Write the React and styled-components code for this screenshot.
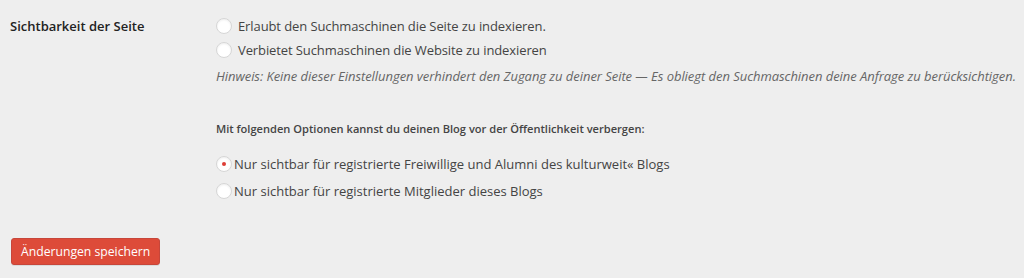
import React, { useState } from 'react';
import styled, { createGlobalStyle } from 'styled-components';

const GlobalStyle = createGlobalStyle`
  html, body {
    margin: 0;
    padding: 0;
    background: #eeeeee;
  }
  body {
    font-family: "Open Sans", "Liberation Sans", sans-serif;
    color: #444;
  }
`;

const Page = styled.div`
  width: 1024px;
  height: 278px;
  background: #eeeeee;
  overflow: hidden;
`;

const SettingRow = styled.div`
  display: flex;
  padding-top: 14px;
`;

const Label = styled.div`
  width: 206px;
  padding-left: 10px;
  padding-top: 2px;
  font-size: 13px;
  font-weight: 600;
  color: #222;
  line-height: 20px;
`;

const Field = styled.div`
  display: flex;
  flex-direction: column;
`;

const RadioList = styled.div`
  display: flex;
  flex-direction: column;
  gap: ${(p) => p.$gap}px;
`;

const Option = styled.label`
  display: flex;
  align-items: center;
  gap: ${(p) => p.$gap}px;
  height: 24px;
  font-size: 13px;
  letter-spacing: ${(p) => p.$tracking}px;
  color: #444;
  cursor: pointer;
`;

const Radio = styled.span`
  position: relative;
  width: 16px;
  height: 16px;
  flex: none;
  border-radius: 50%;
  background: #fff;
  border: 1px solid #d6d6d6;
  box-shadow: inset 0 1px 2px rgba(0, 0, 0, 0.07);
  box-sizing: border-box;

  &[aria-checked='true']::after {
    content: '';
    position: absolute;
    left: 5px;
    top: 5px;
    width: 4px;
    height: 4px;
    border-radius: 50%;
    background: #dd3d36;
  }
`;

const Hint = styled.p`
  margin: 4px 0 0;
  font-size: 13px;
  font-style: italic;
  letter-spacing: -0.05px;
  color: #666;
  line-height: 20px;
`;

const SubHeading = styled.p`
  margin: 33px 0 13px;
  font-size: 11.1px;
  font-weight: 600;
  color: #444;
  line-height: 20px;
`;

const Footer = styled.div`
  padding: 35px 0 0 11px;
`;

const SaveButton = styled.button`
  height: 27px;
  padding: 0 9px;
  border: 1px solid #c7463a;
  border-radius: 3px;
  background: #dd4b39;
  color: #fff;
  font-family: "Open Sans", "Liberation Sans", sans-serif;
  font-size: 12.2px;
  line-height: 25px;
  box-shadow: 0 1px 0 rgba(0, 0, 0, 0.08);
  cursor: pointer;
`;

const searchOptions = [
  'Erlaubt den Suchmaschinen die Seite zu indexieren.',
  'Verbietet Suchmaschinen die Website zu indexieren',
];

const privateOptions = [
  'Nur sichtbar für registrierte Freiwillige und Alumni des kulturweit« Blogs',
  'Nur sichtbar für registrierte Mitglieder dieses Blogs',
];

export default function App() {
  const [selected, setSelected] = useState('private-0');

  return (
    <Page>
      <GlobalStyle />
      <SettingRow>
        <Label>Sichtbarkeit der Seite</Label>
        <Field>
          <RadioList $gap={0}>
            {searchOptions.map((text, i) => (
              <Option key={text} $gap={6} $tracking={-0.1} onClick={() => setSelected('search-' + i)}>
                <Radio aria-checked={selected === 'search-' + i} />
                {text}
              </Option>
            ))}
          </RadioList>
          <Hint>
            Hinweis: Keine dieser Einstellungen verhindert den Zugang zu deiner Seite — Es obliegt den Suchmaschinen deine Anfrage zu berücksichtigen.
          </Hint>
          <SubHeading>Mit folgenden Optionen kannst du deinen Blog vor der Öffentlichkeit verbergen:</SubHeading>
          <RadioList $gap={3}>
            {privateOptions.map((text, i) => (
              <Option key={text} $gap={2} $tracking={0} onClick={() => setSelected('private-' + i)}>
                <Radio aria-checked={selected === 'private-' + i} />
                {text}
              </Option>
            ))}
          </RadioList>
        </Field>
      </SettingRow>
      <Footer>
        <SaveButton>Änderungen speichern</SaveButton>
      </Footer>
    </Page>
  );
}
